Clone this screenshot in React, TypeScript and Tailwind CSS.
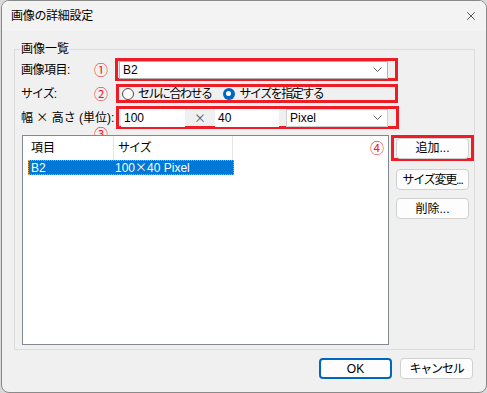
import { X } from 'lucide-react'

const font = { fontFamily: '"Liberation Sans", "Noto Sans CJK JP", sans-serif' }
const cjk = { fontFamily: '"Noto Sans CJK JP", sans-serif' }

function Chevron() {
  return (
    <svg width="9" height="5" viewBox="0 0 9 5" className="shrink-0">
      <polyline points="0.5,0.5 4.5,4.5 8.5,0.5" fill="none" stroke="#606060" strokeWidth="1" />
    </svg>
  )
}

function Num({ n }: { n: string }) {
  return <span className="w-[14px] text-center text-[14px] leading-none text-[#ee1c25]">{n}</span>
}

function Btn({ label, primary, tight }: { label: string; primary?: boolean; tight?: boolean }) {
  return (
    <div
      className={`flex h-[21px] w-[73px] items-center justify-center whitespace-nowrap rounded-[4px] bg-[#fdfdfd] text-[12px] ${
        primary ? 'border-2 border-[#0067c0]' : 'border border-[#d0d0d0]'
      } ${tight ? 'tracking-[-1.2px]' : ''}`}
    >
      {label}
    </div>
  )
}

export default function App() {
  return (
    <div className="h-[393px] w-[487px] bg-[#d9d9d9] pl-[1px] text-black" style={font}>
      <div className="h-[393px] w-[486px] overflow-hidden rounded-[8px] border border-[#8a8a8a] bg-[#f0f0f0]">
        <div className="flex h-[30px] items-center justify-between bg-[#f3f3f3] pl-[9px] pr-[8px]">
          <span className="text-[12px] tracking-[-0.3px]">画像の詳細設定</span>
          <X size={14} strokeWidth={1.3} className="text-[#222]" />
        </div>

        <div className="px-[12px] pt-[18px]">
          <div className="relative h-[301px] w-[461px] border border-[#dcdcdc]">
            <span className="absolute left-[5px] top-[-9px] bg-[#f0f0f0] px-[1px] text-[12px] leading-[16px]">画像一覧</span>

            <div className="flex flex-col gap-[3px] pl-[6px] pt-[8px]">
              <div className="flex h-[23px] items-center">
                <span className="w-[73px] text-[12px] tracking-[-0.5px]">画像項目:</span>
                <Num n="①" />
                <div className="ml-[7px] flex h-[23px] w-[283px] items-center border-[3px] border-[#ee1c25] pl-[1px]">
                  <div className="flex h-[18px] w-[269px] items-center justify-between border border-[#b4b4b4] bg-white pl-[3px] pr-[5px] text-[12px]">
                    <span>B2</span>
                    <Chevron />
                  </div>
                </div>
              </div>

              <div className="flex h-[19px] items-center">
                <span className="w-[73px] text-[12px] tracking-[-1px]">サイズ:</span>
                <Num n="②" />
                <div className="ml-[8px] flex h-[19px] w-[282px] items-center border-[3px] border-[#ee1c25] pl-[3px] text-[12px] tracking-[-1.5px]">
                  <span className="h-[12px] w-[12px] rounded-full border border-[#4a4a4a] bg-white" />
                  <span className="ml-[4px]">セルに合わせる</span>
                  <span className="ml-[11px] flex h-[12px] w-[12px] items-center justify-center rounded-full bg-[#0067c0]">
                    <span className="h-[5px] w-[5px] rounded-full bg-white" />
                  </span>
                  <span className="ml-[5px]">サイズを指定する</span>
                </div>
              </div>

              <div className="relative flex h-[23px] items-center">
                <span className="w-[95px] whitespace-nowrap text-[12px]">
                  幅 <span style={cjk}>×</span> 高さ (単位):
                </span>
                <span className="absolute left-[73px] top-[16px]">
                  <Num n="③" />
                </span>
                <div className="flex h-[23px] w-[283px] items-center border-[3px] border-[#ee1c25] pl-[2px] text-[12px]">
                  <div className="flex h-[18px] w-[64px] items-center bg-white pl-[3px]">100</div>
                  <span className="w-[30px] text-center text-[#555]" style={cjk}>×</span>
                  <div className="flex h-[18px] w-[64px] items-center bg-white pl-[3px]">40</div>
                  <div className="ml-[7px] flex h-[18px] w-[102px] items-center justify-between border border-[#d0d0d0] bg-white pl-[3px] pr-[5px]">
                    <span>Pixel</span>
                    <Chevron />
                  </div>
                </div>
              </div>
            </div>

            <div className="mt-[6px] flex pl-[7px]">
              <div className="relative h-[210px] w-[367px] border border-[#828790] bg-white text-[12px]">
                <div className="flex h-[24px]">
                  <div className="flex w-[91px] items-center border-r border-[#e5e5e5] pl-[8px]">項目</div>
                  <div className="flex w-[119px] items-center border-r border-[#e5e5e5] pl-[4px] tracking-[-1px]">サイズ</div>
                </div>
                <div className="ml-[5px] flex h-[15px] w-[206px] items-center border border-dotted border-[#f0a030] bg-[#0078d7] text-white">
                  <span className="w-[86px] pl-[2px]">B2</span>
                  <span>
                    100<span style={cjk}>×</span>40 Pixel
                  </span>
                </div>
                <span className="absolute left-[347px] top-[4px]">
                  <Num n="④" />
                </span>
              </div>

              <div className="ml-[2px] flex flex-col gap-[8px]">
                <div className="flex h-[26px] w-[83px] items-center justify-center border-[3px] border-[#ee1c25]">
                  <Btn label="追加..." />
                </div>
                <div className="flex flex-col gap-[8px] pl-[5px]">
                  <Btn label="サイズ変更..." tight />
                  <Btn label="削除..." />
                </div>
              </div>
            </div>
          </div>

          <div className="mt-[8px] flex justify-end gap-[8px] pr-[1px]">
            <Btn label="OK" primary />
            <Btn label="キャンセル" tight />
          </div>
        </div>
      </div>
    </div>
  )
}
